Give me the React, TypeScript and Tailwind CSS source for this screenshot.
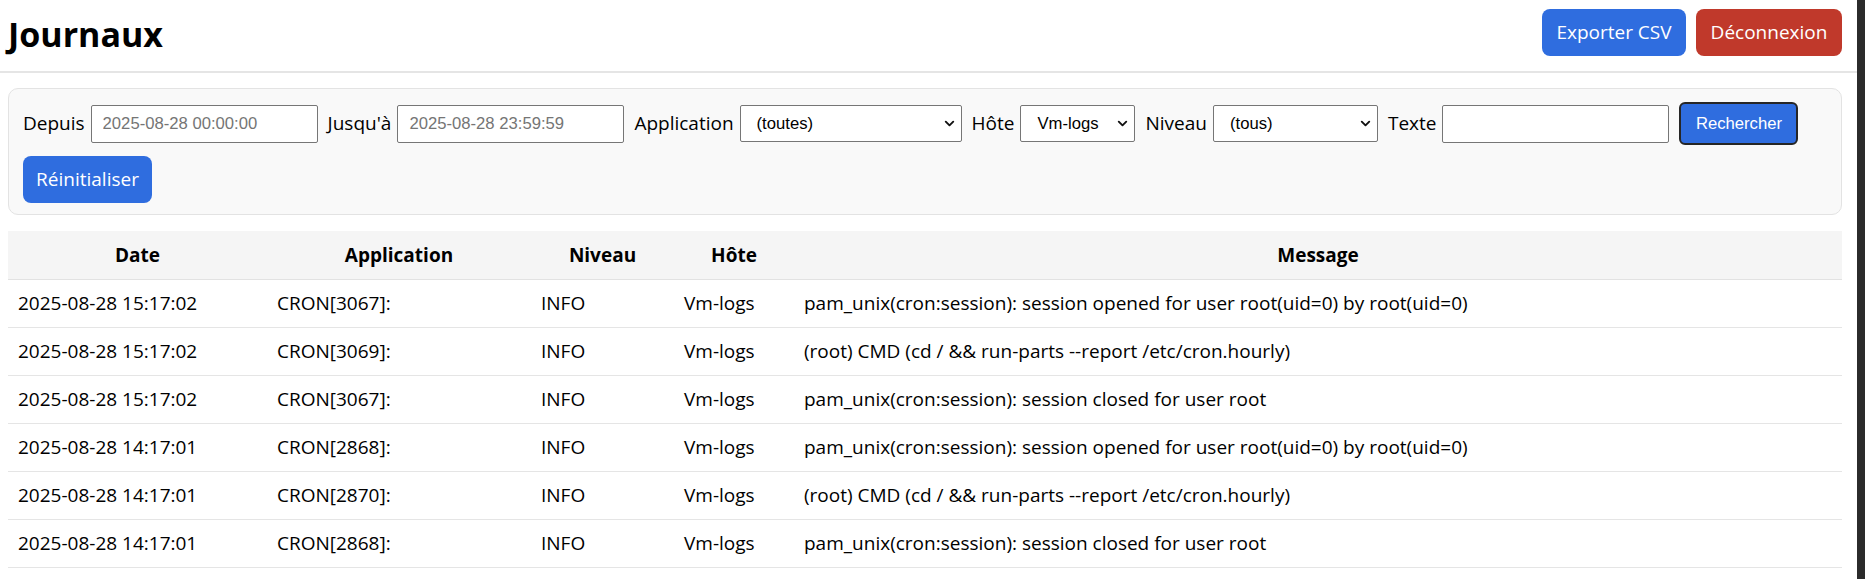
import { ChevronDown } from 'lucide-react';

const logs = [
  ['2025-08-28 15:17:02', 'CRON[3067]:', 'INFO', 'Vm-logs', 'pam_unix(cron:session): session opened for user root(uid=0) by root(uid=0)'],
  ['2025-08-28 15:17:02', 'CRON[3069]:', 'INFO', 'Vm-logs', '(root) CMD (cd / && run-parts --report /etc/cron.hourly)'],
  ['2025-08-28 15:17:02', 'CRON[3067]:', 'INFO', 'Vm-logs', 'pam_unix(cron:session): session closed for user root'],
  ['2025-08-28 14:17:01', 'CRON[2868]:', 'INFO', 'Vm-logs', 'pam_unix(cron:session): session opened for user root(uid=0) by root(uid=0)'],
  ['2025-08-28 14:17:01', 'CRON[2870]:', 'INFO', 'Vm-logs', '(root) CMD (cd / && run-parts --report /etc/cron.hourly)'],
  ['2025-08-28 14:17:01', 'CRON[2868]:', 'INFO', 'Vm-logs', 'pam_unix(cron:session): session closed for user root'],
];

function Select({ value, width }: { value: string; width: string }) {
  return (
    <div className={`relative h-[37px] ${width}`}>
      <select
        defaultValue={value}
        className="h-full w-full appearance-none rounded-[2px] border border-[#767676] bg-white pl-[16px] font-['Liberation_Sans',Arial,sans-serif] text-[16.67px] text-black outline-none"
      >
        <option>{value}</option>
      </select>
      <ChevronDown className="pointer-events-none absolute right-[5px] top-[11px] h-[15px] w-[15px] text-[#111]" strokeWidth={3} />
    </div>
  );
}

function TextInput({ placeholder }: { placeholder?: string }) {
  return (
    <input
      type="text"
      placeholder={placeholder}
      className="h-[38px] w-[227px] rounded-[2px] border border-[#767676] bg-white px-[11px] font-['Liberation_Sans',Arial,sans-serif] text-[16.67px] text-black outline-none placeholder:text-[#757575]"
    />
  );
}

export default function App() {
  return (
    <div className="flex h-[579px] w-full overflow-hidden bg-white font-['Open_Sans','Noto_Sans',sans-serif] text-[19px] text-black">
      <div className="min-w-0 flex-1">
        {/* Top bar */}
        <header className="flex h-[73px] items-start justify-between border-b-2 border-[#e5e5e5] pl-[8px] pr-[15px] pt-[9px]">
          <h1 className="mt-[2px] text-[34px] font-bold leading-[47px]">Journaux</h1>
          <div className="flex gap-[10px]">
            <button className="h-[47px] w-[144px] rounded-[8px] bg-[#2f6ddf] text-white">Exporter CSV</button>
            <button className="h-[47px] w-[146px] rounded-[8px] bg-[#c0392b] text-white">Déconnexion</button>
          </div>
        </header>

        {/* Filters */}
        <div className="ml-[8px] mr-[15px] mt-[15px] rounded-[10px] border border-[#e3e3e3] bg-[#f9f9f9] px-[14px] pb-[11px] pt-[13px]">
          <div className="flex flex-wrap items-center gap-x-[10px]">
            <label className="flex items-center gap-[6px]">
              Depuis <TextInput placeholder="2025-08-28 00:00:00" />
            </label>
            <label className="flex items-center gap-[6px]">
              Jusqu'à <TextInput placeholder="2025-08-28 23:59:59" />
            </label>
            <label className="flex items-center gap-[6px]">
              Application <Select value="(toutes)" width="w-[222px]" />
            </label>
            <label className="flex items-center gap-[6px]">
              Hôte <Select value="Vm-logs" width="w-[115px]" />
            </label>
            <label className="flex items-center gap-[6px]">
              Niveau <Select value="(tous)" width="w-[165px]" />
            </label>
            <label className="flex items-center gap-[6px]">
              Texte <TextInput />
            </label>
            <button className="h-[43px] w-[119px] rounded-[6px] border-2 border-[#262626] bg-[#2f6ddf] font-['Liberation_Sans',Arial,sans-serif] text-[16.67px] text-white">
              Rechercher
            </button>
          </div>
          <div className="mt-[11px]">
            <button className="h-[47px] w-[129px] rounded-[8px] bg-[#2f6ddf] text-white">Réinitialiser</button>
          </div>
        </div>

        {/* Log table */}
        <div className="ml-[8px] mr-[15px] mt-[16px]">
          <table className="w-full table-fixed border-collapse">
            <colgroup>
              <col className="w-[259px]" />
              <col className="w-[264px]" />
              <col className="w-[143px]" />
              <col className="w-[120px]" />
              <col />
            </colgroup>
            <thead>
              <tr className="h-[48px] border-b border-[#e2e2e2] bg-[#f5f5f5]">
                <th className="px-[10px] font-bold">Date</th>
                <th className="px-[10px] font-bold">Application</th>
                <th className="px-[10px] font-bold">Niveau</th>
                <th className="px-[10px] font-bold">Hôte</th>
                <th className="px-[10px] font-bold">Message</th>
              </tr>
            </thead>
            <tbody>
              {logs.map((row, i) => (
                <tr key={i} className="h-[48px] border-b border-[#e5e5e5]">
                  {row.map((cell, j) => (
                    <td key={j} className="whitespace-nowrap px-[10px] text-left">
                      {cell}
                    </td>
                  ))}
                </tr>
              ))}
            </tbody>
          </table>
        </div>
      </div>
      {/* scrollbar gutter */}
      <div className="w-[8px] shrink-0 bg-[#2b2b2b]" />
    </div>
  );
}
